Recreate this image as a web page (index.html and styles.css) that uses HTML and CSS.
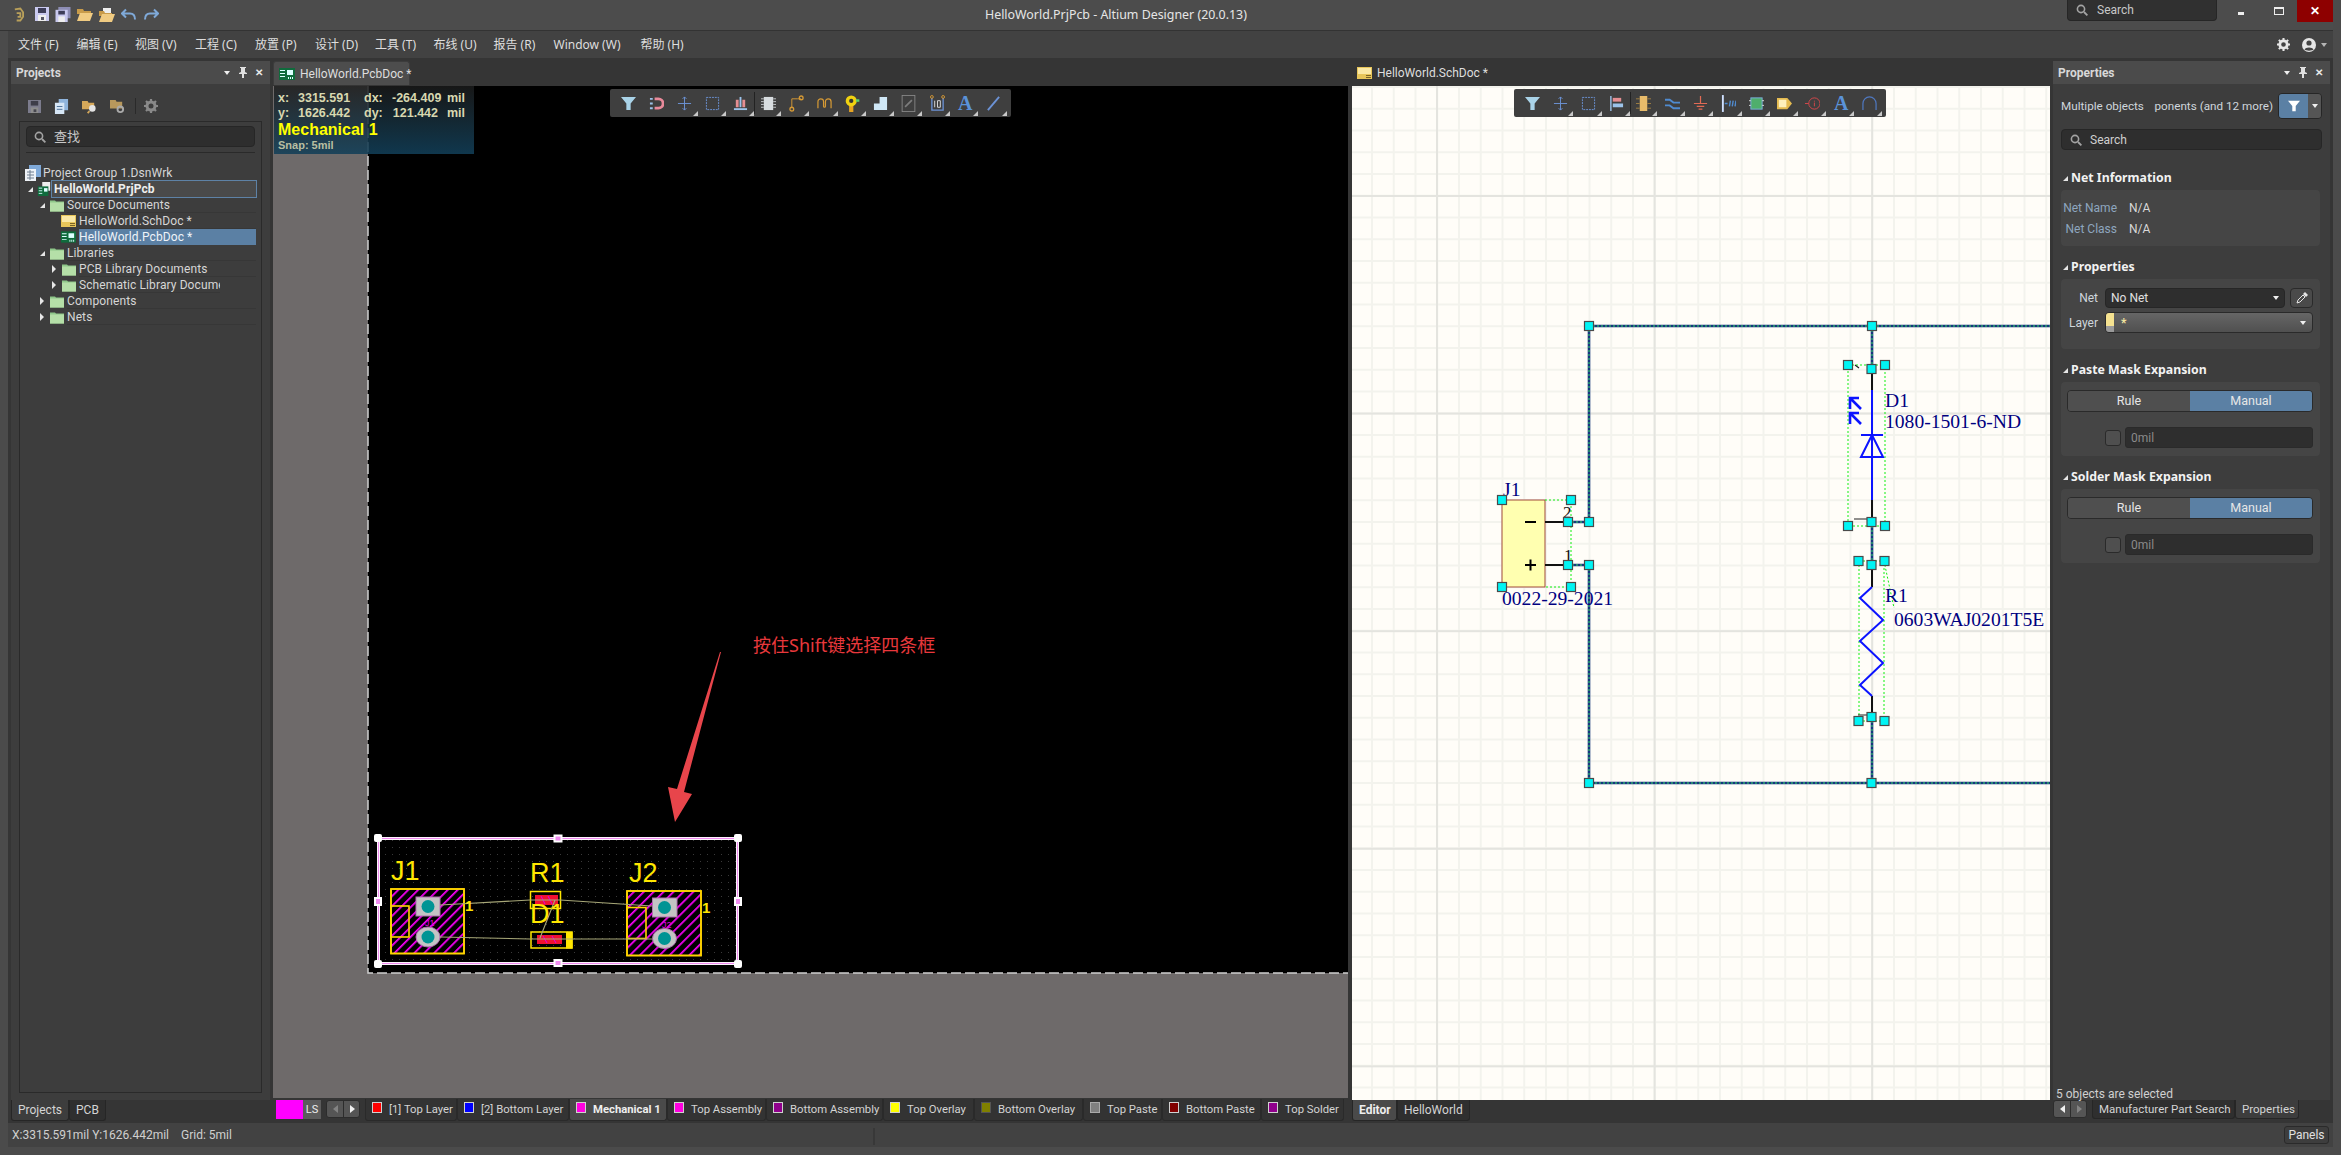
FILE: index.html
```html
<!DOCTYPE html>
<html lang="en">
<head>
<meta charset="utf-8">
<title>HelloWorld.PrjPcb - Altium Designer (20.0.13)</title>
<link rel="stylesheet" href="styles.css">
</head>
<body>
<svg class="defs" width="0" height="0" aria-hidden="true">
  <symbol id="i-folder" viewBox="0 0 14 13"><path d="M0 2h5l1 1h8v10H0z" fill="#8fc88a"/><path d="M0 4h14v9H0z" fill="#b5dfa8"/></symbol>
  <symbol id="i-sch" viewBox="0 0 15 12"><rect width="15" height="12" fill="#e8c65a"/><rect x="1" y="1" width="13" height="6" fill="#fbe9a6"/><path d="M9 8h5v1H9zM9 10h5v1H9z" fill="#7a6326"/></symbol>
  <symbol id="i-pcb" viewBox="0 0 16 12"><rect width="16" height="12" fill="#0f6b3c"/><path d="M1 2h5v1H1zM1 5h5v1H1zM1 8h5v1H1z" fill="#dff"/><rect x="8" y="2" width="6" height="5" fill="#dff"/><path d="M9 9h1v2H9zM11 9h1v2h-1zM13 9h1v2h-1z" fill="#dff"/></symbol>
  <symbol id="i-save" viewBox="0 0 14 14"><path d="M0 0h14v14H0z" fill="#c9c9ef"/><rect x="3" y="1" width="8" height="5" fill="#3d3d58"/><rect x="3" y="8" width="8" height="6" fill="#eee"/><rect x="6" y="10" width="3" height="3" fill="#556"/></symbol>
  <symbol id="i-saveall" viewBox="0 0 16 16"><path d="M3 0h13v12H3z" fill="#8d8db4"/><path d="M0 3h13v13H0z" fill="#c9c9ef"/><rect x="3" y="4" width="7" height="4" fill="#3d3d58"/><rect x="3" y="10" width="7" height="6" fill="#eee"/></symbol>
  <symbol id="i-open" viewBox="0 0 16 13"><path d="M0 1h6l1 2h7v3H0z" fill="#c89b4a"/><path d="M0 13l3-8h13l-3 8z" fill="#f0cb82"/></symbol>
  <symbol id="i-openb" viewBox="0 0 16 15"><path d="M4 1h8v8H4z" fill="#eee"/><path d="M0 4h5l1 2h7v3H0z" fill="#c89b4a"/><path d="M0 15l3-8h13l-3 8z" fill="#f0cb82"/></symbol>
  <symbol id="i-undo" viewBox="0 0 16 12"><path d="M5 1L1 5l4 4M1 5h8c3 0 5 2 5 6" fill="none" stroke="#7fa9d8" stroke-width="2"/></symbol>
  <symbol id="i-redo" viewBox="0 0 16 12"><path d="M11 1l4 4-4 4M15 5H7c-3 0-5 2-5 6" fill="none" stroke="#7fa9d8" stroke-width="2"/></symbol>
  <symbol id="i-search" viewBox="0 0 12 12"><circle cx="5" cy="5" r="3.6" fill="none" stroke="#a3a3a3" stroke-width="1.6"/><path d="M8 8l3.4 3.4" stroke="#a3a3a3" stroke-width="1.8"/></symbol>
  <symbol id="i-gear" viewBox="0 0 14 14"><circle cx="7" cy="7" r="4" fill="none" stroke="currentColor" stroke-width="3"/><path d="M7 0v2.500M7 11.500V14M0 7h2.500M11.500 7H14M2 2l2 2M10 10l2 2M12 2l-2 2M4 10l-2 2" stroke="currentColor" stroke-width="2.200"/></symbol>
  <symbol id="i-user" viewBox="0 0 14 14"><circle cx="7" cy="7" r="7" fill="#e6e6e6"/><circle cx="7" cy="5" r="2.600" fill="#444"/><path d="M2.500 11.500c1-2.800 8-2.800 9 0C10 13 4 13 2.500 11.500z" fill="#444"/></symbol>
  <symbol id="i-pin" viewBox="0 0 8 11"><path d="M1 0h6v1H6v4l2 1v1H5v4H3V7H0V6l2-1V1H1z" fill="#e0e0e0"/></symbol>
  <symbol id="i-filter" viewBox="0 0 14 14"><path d="M0 1h14L9 7v6H5V7z" fill="currentColor"/></symbol>
  <symbol id="i-drop" viewBox="0 0 12 12"><path d="M1 11l1-3 5-5 2 2-5 5z" fill="none" stroke="#e6e6e6"/><path d="M7 2l2-2 3 3-2 2z" fill="#e6e6e6"/></symbol>
  <symbol id="i-cross" viewBox="0 0 16 16"><path d="M8 1v14M1 8h14M6 3l2-2 2 2M6 13l2 2 2-2" fill="none" stroke="#6c93d6"/></symbol>
  <symbol id="i-rect" viewBox="0 0 16 16"><rect x="1.500" y="1.500" width="13" height="13" fill="none" stroke="#6c93d6" stroke-dasharray="2 1"/></symbol>
  <symbol id="i-magnet" viewBox="0 0 16 16"><path d="M6 3h4a5 5 0 010 10H6" fill="none" stroke="#e98a9a" stroke-width="3"/><path d="M1 3h3M1 13h3M1 8h3" stroke="#9cc3ea" stroke-width="2"/></symbol>
  <symbol id="i-bars" viewBox="0 0 16 16"><path d="M3 4h3v8H3zM10 4h3v8h-3z" fill="#e58e92"/><path d="M7 1h2v11H7z" fill="#9cc3ea"/><path d="M1 13h14v2H1z" fill="#9cc3ea"/></symbol>
  <symbol id="i-chip" viewBox="0 0 16 18"><rect x="3" y="2" width="10" height="14" fill="#d8dde0"/><path d="M0 4h3M0 7h3M0 10h3M0 13h3M13 4h3M13 7h3M13 10h3M13 13h3" stroke="#c4c9cc"/></symbol>
  <symbol id="i-route" viewBox="0 0 16 18"><path d="M3 14V4h6l4 0" fill="none" stroke="#d69a35"/><circle cx="3" cy="15" r="2" fill="none" stroke="#d69a35" stroke-width="1.400"/><circle cx="13" cy="3" r="2" fill="none" stroke="#d69a35" stroke-width="1.400"/></symbol>
  <symbol id="i-wave" viewBox="0 0 16 14"><path d="M1 12V5a3 3 0 016 0v5a1 1 0 002 0V5a3 3 0 016 0v7" fill="none" stroke="#d69a35" stroke-width="1.300"/></symbol>
  <symbol id="i-pad" viewBox="0 0 16 20"><path d="M4 12h5v8H4z" fill="#e6a423"/><circle cx="6.500" cy="7" r="6.500" fill="#f0d210"/><circle cx="6.500" cy="7" r="2.500" fill="#333"/><path d="M12 5h4v3h-4z" fill="#5ed06a"/></symbol>
  <symbol id="i-poly" viewBox="0 0 16 16"><path d="M1 8h6V1h8v14H1z" fill="#cfe7f6"/></symbol>
  <symbol id="i-keep" viewBox="0 0 16 20"><rect x=".5" y=".5" width="15" height="19" fill="none" stroke="#8a8a8a"/><path d="M4 14l8-8" stroke="#7d7d7d" stroke-width="2"/></symbol>
  <symbol id="i-dim" viewBox="0 0 16 18"><path d="M2 3v13h12V3" fill="none" stroke="#6c93d6" stroke-width="1.400"/><circle cx="2" cy="2" r="1.500" fill="none" stroke="#d69a35"/><circle cx="14" cy="2" r="1.500" fill="none" stroke="#d69a35"/><path d="M5 6v7M8 6h3v7H8z" fill="none" stroke="#ddd"/></symbol>
  <symbol id="i-line" viewBox="0 0 16 16"><path d="M2 15L14 1" stroke="#6c93d6" stroke-width="2"/></symbol>
  <symbol id="i-align" viewBox="0 0 16 16"><path d="M2 0v16" stroke="#9cc3ea" stroke-width="1.500"/><rect x="4" y="2" width="9" height="4" fill="#e58e92"/><rect x="4" y="8" width="11" height="4" fill="#9cc3ea"/></symbol>
  <symbol id="i-part" viewBox="0 0 16 18"><rect x="4" y="1" width="8" height="16" fill="#e8bb6a"/><path d="M0 4h4M0 9h4M0 14h4M12 4h4M12 9h4M12 14h4" stroke="#a07f42"/></symbol>
  <symbol id="i-bus" viewBox="0 0 16 14"><path d="M0 3h5l4 3h7M0 9h5l4 3h7" fill="none" stroke="#4f8bd0" stroke-width="2"/></symbol>
  <symbol id="i-gnd" viewBox="0 0 16 16"><path d="M8 0v8M1 8h14M4 11h8M6 14h4" stroke="#e36b55" stroke-width="1.300"/></symbol>
  <symbol id="i-pins" viewBox="0 0 16 18"><path d="M1 0h2v18H1z" fill="#cfe0ff"/><path d="M4 9h3M9 12l1-6M12 12l1-6M15 12l1-6" stroke="#4f8bd0" stroke-width="1.500"/></symbol>
  <symbol id="i-sheet" viewBox="0 0 16 16"><rect x="2" y="2" width="12" height="12" fill="#4fae6c" stroke="#7ab0e0"/><path d="M0 5h2M0 10h2M14 5h2M14 10h2" stroke="#ddd"/></symbol>
  <symbol id="i-label" viewBox="0 0 16 12"><path d="M0 0h11l5 6-5 6H0z" fill="#e5bb50"/><rect x="2" y="2" width="8" height="8" fill="#fff0bc"/></symbol>
  <symbol id="i-probe" viewBox="0 0 16 16"><circle cx="10" cy="8" r="6" fill="none" stroke="#d8474b"/><path d="M0 8h4M10 5v1M10 7v4" stroke="#d8474b"/></symbol>
  <symbol id="i-arc" viewBox="0 0 16 16"><path d="M1 15V8a7 7 0 0114 0v7" fill="none" stroke="#4f78c0" stroke-width="1.300"/></symbol>
  <symbol id="i-copy" viewBox="0 0 14 16"><rect x="4" y="0" width="10" height="12" fill="#8fb4dc"/><rect x="0" y="4" width="10" height="12" fill="#d6e6f6"/><path d="M2 8h6M2 11h6" stroke="#4a6f96"/></symbol>
  <symbol id="i-fsearch" viewBox="0 0 16 14"><path d="M0 1h6l1 2h6v7H0z" fill="#d5a85a"/><circle cx="11" cy="9" r="3.500" fill="#e4e4e4"/><path d="M8 12l-2 2" stroke="#d5a85a" stroke-width="2"/></symbol>
  <symbol id="i-fgear" viewBox="0 0 16 16"><path d="M0 1h6l1 2h6v7H0z" fill="#b8985c"/><circle cx="11" cy="11" r="3" fill="none" stroke="#aaa" stroke-width="2"/></symbol>
  <symbol id="i-prj" viewBox="0 0 16 16"><path d="M4 0h12v12H4z" fill="#7fa9d8"/><path d="M0 4h11v12H0z" fill="#eef2f7"/><path d="M2 7h7M2 10h7M2 13h7M5 5v10" stroke="#6f7f90"/></symbol>
  <symbol id="i-prjpcb" viewBox="0 0 14 16"><path d="M5 0h9v10H5z" fill="#eee"/><rect y="5" width="12" height="11" fill="#0f6b3c"/><path d="M1 7h4M1 10h4M1 13h4" stroke="#dff"/><rect x="7" y="7" width="4" height="4" fill="#dff"/></symbol>
</svg>

<div class="app">
  <header class="titlebar">
    <div class="qa">
      <svg class="logo" viewBox="0 0 12 15"><path d="M2 2l6-1 3 4v5l-3 4H4M4 6h4v4H5" fill="none" stroke="#b9a05a" stroke-width="2"/></svg>
      <svg class="qi"><use href="#i-save"/></svg>
      <svg class="qi qi-l"><use href="#i-saveall"/></svg>
      <svg class="qi qi-l"><use href="#i-open"/></svg>
      <svg class="qi qi-l"><use href="#i-openb"/></svg>
      <svg class="qi qi-l"><use href="#i-undo"/></svg>
      <svg class="qi qi-l"><use href="#i-redo"/></svg>
    </div>
    <div class="apptitle">HelloWorld.PrjPcb - Altium Designer (20.0.13)</div>
    <div class="tsearch"><svg class="sico"><use href="#i-search"/></svg><span>Search</span></div>
    <div class="winbtns">
      <span class="wb"><i class="wmin"></i></span>
      <span class="wb"><i class="wmax"></i></span>
      <span class="wb wclose">✕</span>
    </div>
  </header>

  <nav class="menubar">
    <span class="mi w1">文件 (F)</span><span class="mi w1">编辑 (E)</span><span class="mi w2">视图 (V)</span><span class="mi w2">工程 (C)</span><span class="mi w2">放置 (P)</span><span class="mi w2">设计 (D)</span><span class="mi w1">工具 (T)</span><span class="mi w2">布线 (U)</span><span class="mi w2">报告 (R)</span><span class="mi w3">Window (W)</span><span class="mi">帮助 (H)</span>
    <span class="menuright">
      <svg class="mgear"><use href="#i-gear"/></svg>
      <svg class="muser"><use href="#i-user"/></svg>
      <i class="caret"></i>
    </span>
  </nav>

  <main class="workspace">
    <section class="leftcol">
      <div class="panel left">
        <div class="phead"><span>Projects</span><span class="pbtns"><i class="caret white"></i><svg class="pin"><use href="#i-pin"/></svg><b>✕</b></span></div>
        <div class="pbody">
          <div class="ptools">
            <svg class="pt pt-dim"><use href="#i-save"/></svg>
            <svg class="pt"><use href="#i-copy"/></svg>
            <svg class="pt"><use href="#i-fsearch"/></svg>
            <svg class="pt"><use href="#i-fgear"/></svg>
            <i class="tsep"></i>
            <svg class="pt gearg"><use href="#i-gear"/></svg>
          </div>
          <div class="treebox">
            <div class="insearch"><svg class="sico"><use href="#i-search"/></svg><span>查找</span></div>
            <div class="hr"></div>
            <div class="tree">
              <div class="row l0"><svg class="ic16"><use href="#i-prj"/></svg><span class="lab">Project Group 1.DsnWrk</span></div>
              <div class="row l1"><i class="tri open"></i><svg class="ic14"><use href="#i-prjpcb"/></svg><span class="lab prj">HelloWorld.PrjPcb</span></div>
              <div class="row l2"><i class="tri open"></i><svg class="ic14"><use href="#i-folder"/></svg><span class="lab line">Source Documents</span></div>
              <div class="row l3"><svg class="ic15"><use href="#i-sch"/></svg><span class="lab line">HelloWorld.SchDoc *</span></div>
              <div class="row l3"><svg class="ic15"><use href="#i-pcb"/></svg><span class="lab sel">HelloWorld.PcbDoc *</span></div>
              <div class="row l2"><i class="tri open"></i><svg class="ic14"><use href="#i-folder"/></svg><span class="lab line">Libraries</span></div>
              <div class="row l4"><i class="tri"></i><svg class="ic14"><use href="#i-folder"/></svg><span class="lab line">PCB Library Documents</span></div>
              <div class="row l4"><i class="tri"></i><svg class="ic14"><use href="#i-folder"/></svg><span class="lab line clip">Schematic Library Documents</span></div>
              <div class="row l2"><i class="tri"></i><svg class="ic14"><use href="#i-folder"/></svg><span class="lab line">Components</span></div>
              <div class="row l2"><i class="tri"></i><svg class="ic14"><use href="#i-folder"/></svg><span class="lab line">Nets</span></div>
            </div>
          </div>
        </div>
      </div>
      <div class="btabs ltabs"><span class="btab on">Projects</span><span class="btab">PCB</span></div>
    </section>

    <section class="doc pcbdoc">
      <div class="dtabs"><div class="dtab on"><svg class="ic16t"><use href="#i-pcb"/></svg><span>HelloWorld.PcbDoc *</span></div></div>
      <div class="canvas pcbcanvas">
        <svg class="draw" viewBox="273 86 1075 1012" preserveAspectRatio="none">
          <defs>
            <pattern id="hatch" width="7" height="7" patternUnits="userSpaceOnUse" patternTransform="rotate(45)"><rect width="7" height="7" fill="#000"/><rect width="1.700" height="7" fill="#ff00ff"/></pattern>
            <pattern id="dots" width="7" height="7" patternUnits="userSpaceOnUse"><rect width="1" height="1" fill="#3a3a3a"/></pattern>
          </defs>
          <rect x="273" y="86" width="1075" height="1012" fill="#6e6a6a"/>
          <rect x="368" y="86" width="980" height="887" fill="#000"/>
          <path d="M368 86V973H1348" fill="none" stroke="#cfcfcf" stroke-width="1.500" stroke-dasharray="10 4"/>
          <rect x="378" y="838" width="360" height="125" fill="url(#dots)"/>
          <rect x="378.500" y="838.500" width="359" height="125" fill="none" stroke="#fff" stroke-width="3"/>
          <rect x="378.500" y="838.500" width="359" height="125" fill="none" stroke="#f08cf0" stroke-width="1.200"/>

          <g class="pcb-comp">
            <rect x="391" y="889" width="73" height="64.500" fill="url(#hatch)"/>
            <rect x="391" y="889" width="73" height="64.500"/>
            <rect x="391" y="906" width="18" height="31"/>
            <rect x="627" y="891" width="74" height="64.500" fill="url(#hatch)"/>
            <rect x="627" y="891" width="74" height="64.500"/>
            <rect x="627" y="907.500" width="19" height="31"/>
          </g>
          <g class="pads">
            <rect x="416" y="897" width="24" height="19"/>
            <ellipse cx="428" cy="937" rx="12" ry="10"/>
            <rect x="652.500" y="898" width="24.500" height="19"/>
            <ellipse cx="664.500" cy="938.500" rx="12" ry="10"/>
          </g>
          <g fill="#009494">
            <circle cx="428" cy="906.500" r="6.500"/><circle cx="428" cy="937" r="6.500"/>
            <circle cx="664.500" cy="907.500" r="6.500"/><circle cx="664.500" cy="938.500" r="6.500"/>
          </g>
          <rect x="535" y="895" width="23" height="10" fill="#f01030"/>
          <rect x="537" y="935" width="25" height="9" fill="#f01030"/>
          <path d="M541 896l4 8M548 896l4 8M543 936l4 7M552 936l4 7" stroke="#e000e0"/>
          <g fill="none" stroke="#ffe600" stroke-width="1.500">
            <rect x="530.500" y="891.500" width="30" height="17"/>
            <rect x="531" y="932" width="41" height="16"/>
          </g>
          <rect x="566" y="932" width="6.500" height="16.500" fill="#ffe600"/>
          <path d="M440 905L530 900H560L652 906M440 937L530 939H572L652 939M540 938L555 900" fill="none" stroke="#a8a878" stroke-width="1.100"/>
          <g class="pcbtxt">
            <text x="391" y="880">J1</text><text x="530" y="882">R1</text>
            <text x="530" y="923">D1</text><text x="629" y="882">J2</text>
          </g>
          <g class="pcbtxt small"><text x="465" y="911">1</text><text x="702" y="913">1</text></g>
          <g class="pcbtxt tiny"><text x="425" y="926">J1</text><text x="662" y="928">J2</text></g>
          <g fill="#fff">
            <rect x="374" y="834" width="8" height="8" rx="2"/><rect x="734" y="834" width="8" height="8" rx="2"/>
            <rect x="374" y="960" width="8" height="8" rx="2"/><rect x="734" y="960" width="8" height="8" rx="2"/>
          </g>
          <g class="midh">
            <rect x="554.500" y="835.500" width="7" height="6"/><rect x="554.500" y="960" width="7" height="6"/>
            <rect x="375" y="898" width="6" height="7"/><rect x="735" y="898" width="6" height="7"/>
          </g>
          <path d="M721 652L684 792L692 794L675 822L668 787L677 789L720 652Z" fill="#e8454b"/>
          <text class="note" x="753" y="652">按住Shift键选择四条框</text>
        </svg>
        <div class="hud">
          <div class="hudrow"><span>x:</span><span>3315.591</span><span>dx:</span><span>-264.409</span><span>mil</span></div>
          <div class="hudrow"><span>y:</span><span>1626.442</span><span>dy:</span><span>121.442</span><span>mil</span></div>
          <div class="hudlayer">Mechanical 1</div>
          <div class="hudsnap">Snap: 5mil</div>
        </div>
        <div class="toolbar pcbbar">
          <span class="tb notri"><svg class="t16 cfilter"><use href="#i-filter"/></svg></span>
          <span class="tb notri"><svg class="t16"><use href="#i-magnet"/></svg></span>
          <span class="tb"><svg class="t16"><use href="#i-cross"/></svg></span>
          <span class="tb"><svg class="t16"><use href="#i-rect"/></svg></span>
          <span class="tb"><svg class="t16"><use href="#i-bars"/></svg></span>
          <i class="tbsep"></i>
          <span class="tb"><svg class="t16"><use href="#i-chip"/></svg></span>
          <span class="tb"><svg class="t16"><use href="#i-route"/></svg></span>
          <span class="tb"><svg class="t16"><use href="#i-wave"/></svg></span>
          <span class="tb"><svg class="t16"><use href="#i-pad"/></svg></span>
          <span class="tb"><svg class="t16"><use href="#i-poly"/></svg></span>
          <span class="tb"><svg class="t16"><use href="#i-keep"/></svg></span>
          <span class="tb"><svg class="t16"><use href="#i-dim"/></svg></span>
          <span class="tb"><b class="tbA">A</b></span>
          <span class="tb"><svg class="t16"><use href="#i-line"/></svg></span>
        </div>
      </div>
      <div class="layerbar">
        <span class="ls"><i class="lsw"></i><b>LS</b></span>
        <span class="arrows"><i class="ar l dim"></i><i class="ar r"></i></span>
        <div class="layertabs">
          <span class="lt"><i class="sw red"></i>[1] Top Layer</span>
          <span class="lt"><i class="sw blue"></i>[2] Bottom Layer</span>
          <span class="lt on"><i class="sw mag"></i>Mechanical 1</span>
          <span class="lt"><i class="sw mag"></i>Top Assembly</span>
          <span class="lt"><i class="sw pur"></i>Bottom Assembly</span>
          <span class="lt"><i class="sw yel"></i>Top Overlay</span>
          <span class="lt"><i class="sw oli"></i>Bottom Overlay</span>
          <span class="lt"><i class="sw gry"></i>Top Paste</span>
          <span class="lt"><i class="sw mar"></i>Bottom Paste</span>
          <span class="lt"><i class="sw pur"></i>Top Solder</span>
        </div>
      </div>
    </section>

    <section class="doc schdoc">
      <div class="dtabs"><div class="dtab"><svg class="ic15t"><use href="#i-sch"/></svg><span>HelloWorld.SchDoc *</span></div></div>
      <div class="canvas schcanvas">
        <svg class="draw" viewBox="1352 86 698 1014" preserveAspectRatio="none">
          <defs><rect id="hd" x="-4.500" y="-4.500" width="9" height="9" fill="#00f4f4" stroke="#4a4a4a" stroke-width="1.200"/></defs>
          <g class="wire"><path d="M1589 326H2050M1589 326V522M1568 522H1589M1568 565H1589M1589 565V783H2050M1872 326V369M1872 522V565M1872 717V783"/></g>
          <g class="wire2"><path d="M1589 326H2050M1589 326V522M1568 522H1589M1568 565H1589M1589 565V783H2050M1872 326V369M1872 522V565M1872 717V783"/></g>
          <rect x="1502" y="500" width="43" height="87" fill="#ffffb0" stroke="#a04a3a"/>
          <path d="M1525 522h11M1525 565h11M1530.500 559.500v11" stroke="#000" stroke-width="2"/>
          <path d="M1545 522h23M1545 565h23M1568 522M1567 505" stroke="#111" stroke-width="2"/>
          <path d="M1545 500H1571V587H1545M1848 365H1885V526H1848ZM1859 561H1884V721H1859ZM1884 561L1894 608" fill="none" stroke="#10f010" stroke-dasharray="2 2"/>
          <path d="M1872 369V390M1872 500V522M1872 565V587M1872 696V717" stroke="#111" stroke-width="2"/>
          <path d="M1855 365l4 3M1854 519h16M1858 561l4 5M1858 715h14" fill="none" stroke="#222" stroke-width="1.200"/>
          <g fill="none" stroke="#0c14ff" stroke-width="2">
            <path d="M1872 390V500M1861 435H1883M1872 435L1861 457H1883Z"/>
            <path class="arr" d="M1850 409V398H1859M1850 398L1861 409M1850 424V413H1859M1850 413L1861 424"/>
            <path d="M1872 587L1860 598L1883 620L1860 641L1883 663L1860 685L1872 696"/>
          </g>
          <g class="sch">
            <text x="1503" y="496">J1</text><text x="1502" y="605">0022-29-2021</text>
            <text x="1885" y="407">D1</text><text x="1885" y="428">1080-1501-6-ND</text>
            <text x="1885" y="602">R1</text><text x="1894" y="626">0603WAJ0201T5E</text>
          </g>
          <g class="schn"><text x="1563" y="518">2</text><text x="1564" y="561">1</text></g>
          <use href="#hd" x="1589" y="326"/><use href="#hd" x="1872" y="326"/>
          <use href="#hd" x="1502" y="500"/><use href="#hd" x="1571" y="500"/><use href="#hd" x="1502" y="587"/><use href="#hd" x="1571" y="587"/>
          <use href="#hd" x="1568" y="522"/><use href="#hd" x="1589" y="522"/><use href="#hd" x="1568" y="565"/><use href="#hd" x="1589" y="565"/>
          <use href="#hd" x="1848" y="365"/><use href="#hd" x="1885" y="365"/><use href="#hd" x="1871.500" y="369"/><use href="#hd" x="1871.500" y="522"/><use href="#hd" x="1848" y="526"/><use href="#hd" x="1885" y="526"/>
          <use href="#hd" x="1858.500" y="561"/><use href="#hd" x="1884.500" y="561"/><use href="#hd" x="1871.500" y="565"/><use href="#hd" x="1871.500" y="717"/><use href="#hd" x="1858.500" y="721"/><use href="#hd" x="1884.500" y="721"/>
          <use href="#hd" x="1589" y="783"/><use href="#hd" x="1871.500" y="783"/>
        </svg>
        <div class="toolbar schbar">
          <span class="tb notri"><svg class="t16 cfilter"><use href="#i-filter"/></svg></span>
          <span class="tb"><svg class="t16"><use href="#i-cross"/></svg></span>
          <span class="tb"><svg class="t16"><use href="#i-rect"/></svg></span>
          <span class="tb"><svg class="t16"><use href="#i-align"/></svg></span>
          <i class="tbsep"></i>
          <span class="tb"><svg class="t16"><use href="#i-part"/></svg></span>
          <span class="tb"><svg class="t16"><use href="#i-bus"/></svg></span>
          <span class="tb"><svg class="t16"><use href="#i-gnd"/></svg></span>
          <span class="tb"><svg class="t16"><use href="#i-pins"/></svg></span>
          <span class="tb"><svg class="t16"><use href="#i-sheet"/></svg></span>
          <span class="tb"><svg class="t16"><use href="#i-label"/></svg></span>
          <span class="tb"><svg class="t16"><use href="#i-probe"/></svg></span>
          <span class="tb"><b class="tbA">A</b></span>
          <span class="tb"><svg class="t16"><use href="#i-arc"/></svg></span>
        </div>
      </div>
      <div class="btabs stabs"><span class="btab on bold">Editor</span><span class="btab">HelloWorld</span></div>
    </section>

    <section class="rightcol">
      <div class="panel right">
        <div class="phead"><span>Properties</span><span class="pbtns"><i class="caret white"></i><svg class="pin"><use href="#i-pin"/></svg><b>✕</b></span></div>
        <div class="pbody rbody">
          <div class="objrow"><span>Multiple objects</span><span class="clipobj"><span>Components (and 12 more)</span></span>
            <span class="fbtn"><span class="fb1"><svg class="f14"><use href="#i-filter"/></svg></span><span class="fb2"><i class="caret white"></i></span></span>
          </div>
          <div class="rsearch"><svg class="sico"><use href="#i-search"/></svg><span>Search</span></div>

          <h3 class="sec"><i class="sectri"></i>Net Information</h3>
          <div class="box netinfo">
            <div class="kv"><span class="k">Net Name</span><span>N/A</span></div>
            <div class="kv"><span class="k">Net Class</span><span>N/A</span></div>
          </div>

          <h3 class="sec"><i class="sectri"></i>Properties</h3>
          <div class="box props">
            <div class="frow"><span class="flab">Net</span><span class="sel1">No Net<i class="caret white"></i></span><span class="drop"><svg class="d12"><use href="#i-drop"/></svg></span></div>
            <div class="frow"><span class="flab">Layer</span><span class="sel2"><i class="lswatch"></i><em>*</em><i class="caret white"></i></span></div>
          </div>

          <h3 class="sec"><i class="sectri"></i>Paste Mask Expansion</h3>
          <div class="box mask">
            <div class="seg"><span>Rule</span><span class="on">Manual</span></div>
            <div class="mrow"><i class="cb"></i><span class="minp">0mil</span></div>
          </div>

          <h3 class="sec"><i class="sectri"></i>Solder Mask Expansion</h3>
          <div class="box mask">
            <div class="seg"><span>Rule</span><span class="on">Manual</span></div>
            <div class="mrow"><i class="cb"></i><span class="minp">0mil</span></div>
          </div>

          <div class="selcount">5 objects are selected</div>
        </div>
      </div>
      <div class="btabs rtabs">
        <span class="arrows"><i class="ar l"></i><i class="ar r dim"></i></span>
        <span class="btab dark">Manufacturer Part Search</span><span class="btab on">Properties</span>
      </div>
    </section>
  </main>

  <footer class="statusbar">
    <span class="coord">X:3315.591mil Y:1626.442mil</span><span class="grid">Grid: 5mil</span><i class="stsep"></i>
    <span class="panelsbtn">Panels</span>
  </footer>
</div>
</body>
</html>
```

FILE: styles.css
```css
* { box-sizing: border-box; }
html, body { margin: 0; padding: 0; }
body {
  width: 2341px; height: 1155px; overflow: hidden;
  background: #4b4b4b; color: #dcdcdc;
  font: 12px/16px Roboto, "Noto Sans CJK SC", sans-serif;
}
i, em, b { font-style: normal; }
.defs { position: absolute; }
.app { display: flex; flex-direction: column; height: 1155px; padding: 0 8px 8px 0; }

/* title bar */
.titlebar {
  height: 31px; flex: none; display: flex; align-items: flex-start;
  background: #4c4c4c; border-bottom: 1px solid #333; padding-left: 13px; position: relative;
}
.qa { display: flex; align-items: center; height: 28px; }
.logo { width: 11px; height: 15px; }
.qi { width: 14px; height: 14px; margin-left: 11px; }
.qi-l { width: 16px; height: 15px; margin-left: 6px; }
.apptitle { position: absolute; left: 985px; top: 7px; color: #e6e6e6; font: 12.400px/16px "Noto Sans", sans-serif; white-space: nowrap; }
.tsearch {
  margin-left: auto; width: 150px; height: 21px; background: #303030; border: 1px solid #262626;
  border-top: 0; border-radius: 0 0 4px 4px; display: flex; align-items: center; padding-left: 8px; gap: 9px;
  font-size: 12px; color: #c8c8c8;
}
.sico { width: 12px; height: 12px; flex: none; }
.winbtns { margin-left: 8px; display: flex; }
.wb { width: 36px; height: 22px; display: flex; align-items: center; justify-content: center; color: #fff; }
.wmin { width: 6px; height: 3px; background: #eee; margin-top: 4px; margin-left: -4px; }
.wmax { width: 10px; height: 8px; border: 1px solid #eee; border-top-width: 2px; }
.wclose { background: #8e0000; font-size: 12px; font-weight: bold; }

/* menu */
.menubar {
  height: 27px; flex: none; margin-left: 8px; display: flex; align-items: center; padding-left: 10px;
  background: #424242; font: 12px/16px "Noto Sans", "Noto Sans CJK SC", sans-serif; color: #dedede; white-space: nowrap;
}
.mi { display: block; }
.w1 { width: 58.500px; } .w2 { width: 60px; } .w3 { width: 78px; }
.mi.w3 { width: 87px; }
.menuright { margin-left: auto; display: flex; align-items: center; padding-right: 6px; }
.mgear { width: 13px; height: 13px; color: #e6e6e6; }
.muser { width: 14px; height: 14px; margin-left: 12px; }
.caret { display: inline-block; width: 0; height: 0; border: 3.500px solid transparent; border-top: 4px solid #b5b5b5; border-bottom: 0; margin-left: 5px; }
.caret.white { border-top-color: #f0f0f0; }

/* workspace */
.workspace {
  flex: 1; display: flex; margin-left: 8px; background: #353535; padding: 3px 3px 0; min-height: 0;
}
.leftcol { width: 259px; flex: none; display: flex; flex-direction: column; }
.panel { flex: 1; display: flex; flex-direction: column; background: #3d3d3d; min-height: 0; }
.phead {
  height: 23px; flex: none; background: #4b4b4b; display: flex; align-items: center; justify-content: space-between;
  padding: 0 7px 0 5px; font-weight: 700; color: #d8d8d8; font-size: 12px;
}
.pbtns { display: flex; align-items: center; }
.pbtns .caret { margin-left: 0; }
.pin { width: 8px; height: 11px; margin: 0 8px 0 9px; }
.pbtns b { font-size: 10px; color: #e8e8e8; }
.pbody { flex: 1; display: flex; flex-direction: column; min-height: 0; }
.ptools { height: 37px; flex: none; display: flex; align-items: center; padding: 7px 0 0 17px; }
.pt { width: 15px; height: 15px; margin-right: 13px; }
.pt-dim { opacity: .45; width: 13px; height: 13px; }
.tsep { width: 1px; height: 16px; background: #2a2a2a; margin-right: 8px; margin-left: -3px; }
.gearg { color: #8a8a8a; width: 14px; height: 14px; }
.treebox { flex: 1; margin: 0 8px 7px; border: 1px solid #2a2a2a; display: flex; flex-direction: column; padding-top: 4px; }
.insearch {
  margin: 0 6px; height: 21px; flex: none; display: flex; align-items: center; gap: 8px; padding-left: 7px;
  background: #2e2e2e; border: 1px solid #262626; border-radius: 4px; font-size: 13px; color: #c8c8c8;
}
.hr { height: 1px; background: #2a2a2a; margin: 5px 6px 12px; flex: none; }
.row { height: 16px; display: flex; align-items: center; padding-right: 5px; white-space: nowrap; }
.l0 { padding-left: 5px; } .l1 { padding-left: 8px; } .l2 { padding-left: 20px; } .l3 { padding-left: 41px; } .l4 { padding-left: 32px; }
.tri { width: 9px; flex: none; height: 0; border-left: 4px solid #e6e6e6; border-top: 4px solid transparent; border-bottom: 4px solid transparent; border-right: 5px solid transparent; }
.tri.open { border: 0; height: 0; width: 9px; position: relative; }
.tri.open::before { content: ""; position: absolute; left: 0; top: -2px; border-left: 5px solid transparent; border-bottom: 5px solid #e6e6e6; }
.l1 .tri { width: 9px; }
.l2 .tri, .l4 .tri { width: 10px; }
.ic16 { width: 16px; height: 16px; flex: none; margin-right: 2px; }
.ic14 { width: 14px; height: 14px; flex: none; margin-right: 3px; }
.ic15 { width: 15px; height: 12px; flex: none; margin-right: 3px; }
.lab { flex: 1; height: 16px; line-height: 16px; color: #d6d6d6; letter-spacing: .1px; overflow: hidden; }
.line { border-bottom: 1px solid #373737; }
.clip { max-width: 141px; flex: 0 1 141px; }
.prj { color: #eee; font-weight: 700; background: #4a4a4a; outline: 1px solid #5e82a6; padding-left: 2px; margin-left: -2px; }
.sel { background: #5b80a4; color: #eef3f8; }

.btabs { display: flex; flex: none; height: 23px; }
.btab { padding: 0 6px; display: flex; align-items: center; height: 21px; background: #2f2f2f; border: 1px solid #262626; border-top: 0; border-radius: 0 0 3px 3px; font-size: 12px; color: #d4d4d4; white-space: nowrap; }
.btab.on { background: #3d3d3d; }
.btab.bold { font-weight: 700; background: #4a4a4a; color: #eee; }

/* documents */
.doc { display: flex; flex-direction: column; min-height: 0; }
.pcbdoc { width: 1075px; margin-left: 3px; flex: none; }
.schdoc { width: 698px; margin-left: 4px; flex: none; }
.dtabs { height: 25px; flex: none; display: flex; }
.dtab { display: flex; align-items: center; height: 24px; padding: 0 5px; gap: 5px; font-size: 12px; color: #dedede; border-radius: 3px 3px 0 0; white-space: nowrap; }
.dtab.on { background: #4d4d4d; width: 137px; border: 1px solid #3c3c3c; border-bottom: 0; }
.ic16t { width: 16px; height: 12px; flex: none; }
.ic15t { width: 15px; height: 12px; flex: none; }
.canvas { position: relative; flex: none; overflow: hidden; }
.pcbcanvas { height: 1012px; background: #000; }
.schcanvas {
  height: 1014px;
  background-color: #fffdf8;
  background-image:
    linear-gradient(to bottom, #e4e4df 2px, transparent 2px),
    linear-gradient(to right, #e4e4df 2px, transparent 2px),
    linear-gradient(to bottom, #f3f3ed 2px, transparent 2px),
    linear-gradient(to right, #f3f3ed 2px, transparent 2px);
  background-size: 100% 217.6px, 217.6px 100%, 100% 21.76px, 21.76px 100%;
  background-position: 0 109px, 84px 0, 0 0, 19px 0;
}
.draw { position: absolute; inset: 0; width: 100%; height: 100%; display: block; }
.pcb-comp rect { stroke: #ffd400; stroke-width: 1.600; fill-opacity: 1; }
.pcb-comp rect:not([fill]) { fill: none; }
.pads rect, .pads ellipse { fill: #c4c4c4; stroke: #b070b0; stroke-width: 1; }
.pcbtxt text { font: 27px "Liberation Sans", sans-serif; fill: #ffe600; }
.pcbtxt.small text { font-size: 15px; font-weight: 700; }
.pcbtxt.tiny text { font-size: 9px; fill: #e000e0; }
.midh rect { fill: #f08cf0; stroke: #fff; stroke-width: 2; }
.note { font: 18px "Noto Sans", "Noto Sans CJK SC", sans-serif; fill: #e8383c; }
.wire path { fill: none; stroke: #17367e; stroke-width: 2.600; }
.wire2 path { fill: none; stroke: #2ca86e; stroke-width: 1.400; stroke-dasharray: 2 2; }
.arr { stroke-width: 2.600; }
.sch text { font: 19.600px "Liberation Serif", serif; fill: #000080; }
.schn text { font: 17px "Liberation Serif", serif; fill: #111; }

.hud {
  position: absolute; left: 1px; top: 0; width: 200px; height: 68px; padding: 5px 0 0 4px;
  background: linear-gradient(#1b1b1bd8, #123f58e0);
  font-family: "Liberation Sans", sans-serif; font-weight: 700; color: #d8d8b0;
}
.hudrow { display: grid; grid-template-columns: 20px 66px 28px 55px 24px; font-size: 12.500px; line-height: 15px; }
.hudrow span:nth-child(4) { text-align: right; padding-right: 9px; }
.hudlayer { color: #ffff00; font-size: 16px; line-height: 17px; }
.hudsnap { color: #b8bfa2; font-size: 11px; line-height: 15px; }

.toolbar { position: absolute; top: 3px; height: 28px; display: flex; align-items: center; background: #3f3f3f; border-radius: 2px; padding-left: 4px; }
.pcbbar { left: 337px; width: 401px; }
.schbar { left: 162px; width: 372px; }
.tb { width: 28.200px; height: 28px; flex: none; display: flex; align-items: center; justify-content: center; position: relative; }
.tb::after { content: ""; position: absolute; right: 1px; bottom: 1px; border-left: 5px solid transparent; border-bottom: 5px solid #c8c8c8; }
.tb.notri::after { display: none; }
.t16 { width: 15px; height: 17px; }
.cfilter { color: #a9d3e8; }
.tbA { font: 700 20px "Liberation Serif", serif; color: #5a92d8; }
.tbsep { width: 1px; height: 22px; background: #222; flex: none; margin: 0 -1px; }

.layerbar { height: 25px; flex: none; display: flex; align-items: flex-start; padding: 2px 0 0 3px; }
.ls { display: flex; height: 19px; width: 45px; flex: none; }
.lsw { width: 27px; background: #ff00ff; }
.ls b { flex: 1; background: #5c5c5c; font-weight: 400; font-size: 11px; line-height: 19px; text-align: center; color: #eee; }
.arrows { display: flex; width: 34px; height: 18px; flex: none; background: #555; border: 1px solid #2c2c2c; border-radius: 3px; margin-left: 5px; }
.ar { flex: 1; position: relative; }
.ar + .ar { border-left: 1px solid #2c2c2c; }
.ar::before { content: ""; position: absolute; top: 4px; left: 6px; border-top: 4px solid transparent; border-bottom: 4px solid transparent; }
.ar.r::before { border-left: 5px solid #f0f0f0; }
.ar.l::before { border-right: 5px solid #f0f0f0; }
.ar.dim::before { opacity: .3; }
.layertabs { display: grid; grid-template-columns: 92px 112px 98px 99px 117px 91px 109px 79px 99px 83px; margin-left: 5px; margin-top: -1px; }
.lt { height: 22px; display: flex; align-items: center; gap: 7px; padding-left: 6px; background: #333; border: 1px solid #2a2a2a; border-top: 0; border-radius: 0 0 3px 3px; font-size: 11.300px; color: #d4d4d4; white-space: nowrap; overflow: hidden; }
.lt.on { background: #4a4a4a; font-weight: 700; color: #eee; }
.sw { width: 10px; height: 11px; flex: none; border: 1px solid #d0d0d0; margin-top: -4px; }
.red { background: #f00; } .blue { background: #00f; } .mag { background: #ff00e0; } .pur { background: #90008c; }
.yel { background: #ff0; } .oli { background: #808000; border-color: #555; } .gry { background: #808080; border-color: #aaa; } .mar { background: #800000; }

.stabs .btab:first-child { width: 45px; }

/* right panel */
.rightcol { width: 277px; flex: none; margin-left: 3px; display: flex; flex-direction: column; }
.rbody { padding: 0 8px; position: relative; }
.objrow { height: 26px; margin-top: 9px; display: flex; align-items: center; font-size: 11.700px; color: #cfd6dc; flex: none; white-space: nowrap; }
.objrow > span:first-child { width: 84px; flex: none; }
.clipobj { width: 119px; overflow: hidden; margin-left: 9px; direction: rtl; flex: none; }
.clipobj span { direction: ltr; display: inline-block; }
.fbtn { display: flex; width: 44px; height: 26px; margin-left: 5px; border: 1px solid #262626; border-radius: 4px; overflow: hidden; flex: none; }
.fb1 { width: 29px; background: #5b80a4; display: flex; align-items: center; justify-content: center; color: #fff; }
.f14 { width: 12px; height: 12px; }
.fb2 { flex: 1; background: #555; display: flex; align-items: center; justify-content: center; }
.fb2 .caret { margin: 0; }
.rsearch { height: 21px; margin-top: 10px; display: flex; align-items: center; gap: 8px; padding-left: 8px; background: #2e2e2e; border: 1px solid #262626; border-radius: 4px; font-size: 12px; color: #d0d0d0; flex: none; }
.sec { margin: 0; height: 24px; flex: none; display: flex; align-items: center; font: 700 12.300px/16px "Noto Sans", sans-serif; color: #f2f2f2; gap: 3px; }
.sectri { border-left: 5px solid transparent; border-bottom: 5px solid #e6e6e6; margin-left: 2px; margin-top: 1px; }
.rsearch + .sec { margin-top: 16px; }
.box { background: #454545; border-radius: 4px; width: 259px; flex: none; }
.box + .sec { margin-top: 9px; }
.netinfo { height: 56px; padding: 7px 0 0; }
.kv { display: flex; height: 21px; align-items: center; gap: 12px; font-size: 12px; color: #d8d8d8; white-space: nowrap; }
.k { width: 56px; text-align: right; color: #8ea6bf; }
.props { height: 70px; padding: 8px 0 0; position: relative; }
.frow { display: flex; align-items: center; height: 21px; margin-bottom: 4px; }
.flab { width: 44px; padding-right: 7px; text-align: right; flex: none; color: #cfd6dc; font-size: 12px; }
.sel1 { width: 180px; height: 20px; background: #2e2e2e; border: 1px solid #262626; border-radius: 4px; display: flex; align-items: center; justify-content: space-between; padding: 0 5px; font-size: 12px; color: #e0e0e0; }
.drop { width: 23px; height: 20px; margin-left: 5px; border: 1px solid #2a2a2a; border-radius: 4px; background: #4a4a4a; display: flex; align-items: center; justify-content: center; }
.d12 { width: 12px; height: 12px; }
.sel2 { width: 208px; height: 21px; background: linear-gradient(#666, #505050); border: 1px solid #2a2a2a; border-radius: 4px; display: flex; align-items: center; padding-right: 6px; overflow: hidden; }
.lswatch { width: 8px; height: 100%; flex: none; background: linear-gradient(#f5e290 70%, #9a9a9a 70%); }
.sel2 em { margin-left: 7px; color: #f3e6a0; font-weight: 700; }
.sel2 .caret { margin-left: auto; }
.mask { height: 74px; padding: 8px 0 0 6px; }
.seg { display: flex; width: 246px; height: 22px; border: 1px solid #2a2a2a; border-radius: 4px; overflow: hidden; font-size: 12.500px; }
.seg span { flex: 1; display: flex; align-items: center; justify-content: center; background: #4f4f4f; color: #e6e6e6; }
.seg .on { background: #5b80a4; }
.mrow { display: flex; align-items: center; margin-top: 15px; padding-left: 38px; }
.cb { width: 16px; height: 16px; flex: none; background: #4f4f4f; border: 1px solid #2a2a2a; border-radius: 3px; }
.minp { margin-left: 4px; width: 188px; height: 21px; background: #2e2e2e; border: 1px solid #2a2a2a; border-radius: 3px; display: flex; align-items: center; padding-left: 5px; color: #8a8a8a; font-size: 12px; }
.selcount { margin: auto -5px 0; height: 16px; font-size: 12px; color: #d0d0d0; line-height: 16px; margin-bottom: -2px; }
.rtabs { height: 23px; }
.rtabs .arrows { margin: 0 5px 0 0; height: 18px; }
.rtabs .btab { height: 19px; font-size: 11.500px; }
.btab.dark { background: #2f2f2f; width: 143px; }
.rtabs .btab.on { background: #3d3d3d; width: 64px; }

/* status bar */
.statusbar { height: 24px; flex: none; margin-left: 8px; background: #424242; display: flex; align-items: center; padding-left: 4px; font-size: 12px; color: #d0d0d0; position: relative; }
.grid { margin-left: 12px; }
.stsep { position: absolute; left: 865px; top: 5px; width: 2px; height: 17px; background: #383838; }
.panelsbtn { margin-left: auto; margin-right: 4px; width: 45px; height: 18px; display: flex; align-items: center; justify-content: center; background: #3d3d3d; border: 1px solid #2a2a2a; border-radius: 3px; color: #e0e0e0; }
```
